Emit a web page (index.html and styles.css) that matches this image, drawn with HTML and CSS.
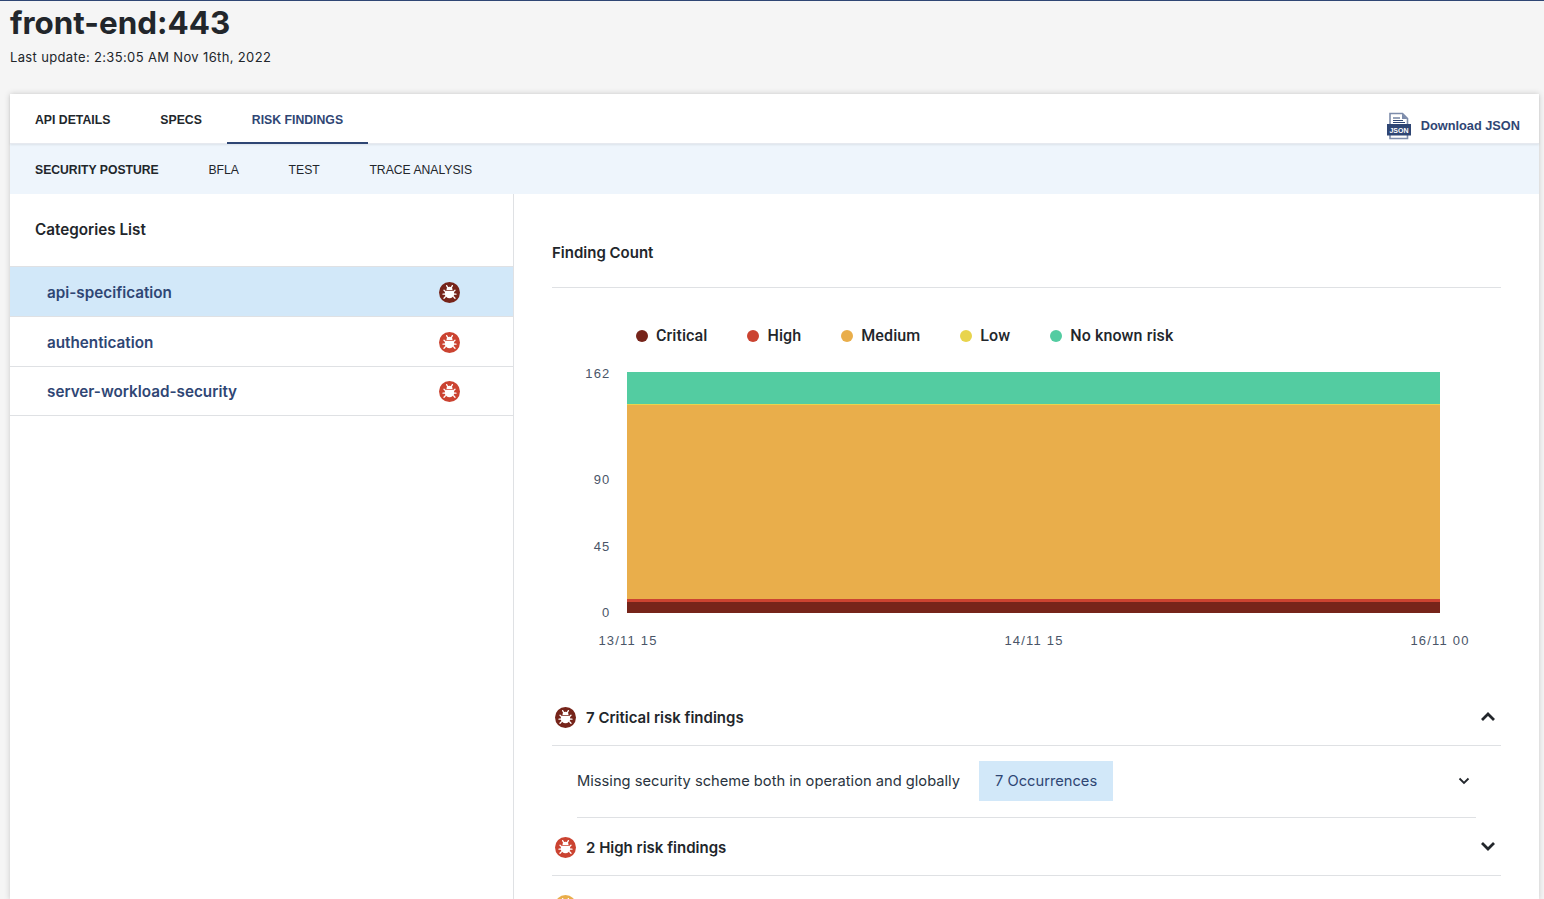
FILE: index.html
```html
<!DOCTYPE html>
<html lang="en">
<head>
<meta charset="utf-8">
<title>front-end:443</title>
<link rel="stylesheet" href="styles.css">
</head>
<body>
<svg class="defs" width="0" height="0" aria-hidden="true">
  <symbol id="bug" viewBox="0 0 21 21">
    <circle cx="10.5" cy="10.5" r="10.500" fill="currentColor"/>
    <g fill="#fff">
      <path d="M7.500 8a3 3.200 0 0 1 6 0z"/>
      <path d="M6.600 8.800h7.800c.8 1.200 1 2.600.8 3.800-.3 2-2.300 3.700-4.700 3.700s-4.400-1.700-4.700-3.700c-.2-1.200 0-2.600.8-3.800z"/>
    </g>
    <g stroke="#fff" stroke-width="1.300" stroke-linecap="round" fill="none">
      <path d="M7.600 3.600l1 1.800M13.400 3.600l-1 1.800M6.400 9.600L5 8.200M14.600 9.600L16 8.200M5.600 12.200H4M15.400 12.200H17M6.400 14.800L5 16.200M14.600 14.800l1.400 1.400"/>
    </g>
  </symbol>
</svg>
<header class="page-head">
  <h1 class="title">front-end:443</h1>
  <p class="updated">Last update: 2:35:05 AM Nov 16th, 2022</p>
</header>
<main class="card">
  <nav class="tabs">
    <a class="tab">API DETAILS</a>
    <a class="tab">SPECS</a>
    <a class="tab tab-active">RISK FINDINGS</a>
    <a class="download">
      <svg class="json-icon" width="24" height="28" viewBox="0 0 24 28">
        <path d="M3 1.500h12.500l5 5v20h-17.500z" fill="#fff" stroke="#7d8cab" stroke-width="1.600"/>
        <path d="M15 1.500v5.500h5.500z" fill="#7d8cab"/>
        <path d="M6 6h7M6 8.500h10M6 10.500h12" stroke="#2f4674" stroke-width="1"/>
        <rect x="0" y="12" width="24" height="11.500" fill="#2f4674"/>
        <text x="12" y="20.500" class="json-text" text-anchor="middle">JSON</text>
      </svg>
      <span>Download JSON</span>
    </a>
  </nav>
  <nav class="subtabs">
    <a class="subtab subtab-active">SECURITY POSTURE</a>
    <a class="subtab">BFLA</a>
    <a class="subtab">TEST</a>
    <a class="subtab">TRACE ANALYSIS</a>
  </nav>
  <div class="columns">
    <aside class="sidebar">
      <h2 class="side-title">Categories List</h2>
      <ul class="cat-list">
        <li class="cat cat-selected"><span>api-specification</span><svg class="bug critical" width="21" height="21"><use href="#bug"/></svg></li>
        <li class="cat"><span>authentication</span><svg class="bug high" width="21" height="21"><use href="#bug"/></svg></li>
        <li class="cat"><span>server-workload-security</span><svg class="bug high" width="21" height="21"><use href="#bug"/></svg></li>
      </ul>
    </aside>
    <section class="content">
      <h2 class="count-title">Finding Count</h2>
      <ul class="legend">
        <li class="legend-item"><i class="dot bg-critical"></i>Critical</li>
        <li class="legend-item"><i class="dot bg-high"></i>High</li>
        <li class="legend-item"><i class="dot bg-medium"></i>Medium</li>
        <li class="legend-item"><i class="dot bg-low"></i>Low</li>
        <li class="legend-item"><i class="dot bg-none"></i>No known risk</li>
      </ul>
      <svg class="chart" width="950" height="300" viewBox="0 0 950 300">
        <rect x="75" y="9" width="813" height="32" fill="#53cca1"/>
        <rect x="75" y="41" width="813" height="1" fill="#e8d44d"/>
        <rect x="75" y="42" width="813" height="195" fill="#e9ae4b"/>
        <rect x="75" y="236" width="813" height="3" fill="#cb4331"/>
        <rect x="75" y="239" width="813" height="11" fill="#76241a"/>
        <g class="axis">
          <text x="58.500" y="15" text-anchor="end">162</text>
          <text x="58.500" y="121" text-anchor="end">90</text>
          <text x="58.500" y="188" text-anchor="end">45</text>
          <text x="58.500" y="254" text-anchor="end">0</text>
          <text x="76" y="282" text-anchor="middle">13/11 15</text>
          <text x="482" y="282" text-anchor="middle">14/11 15</text>
          <text x="888" y="282" text-anchor="middle">16/11 00</text>
        </g>
      </svg>
      <div class="acc-head">
        <svg class="bug critical" width="21" height="21"><use href="#bug"/></svg>
        <span class="acc-title">7 Critical risk findings</span>
        <svg class="chev" width="16" height="10" viewBox="0 0 16 10"><path d="M2 8l6-6 6 6" fill="none" stroke="#22262b" stroke-width="2.800"/></svg>
      </div>
      <div class="acc-row">
        <span class="acc-text">Missing security scheme both in operation and globally</span>
        <span class="occ">7 Occurrences</span>
        <svg class="chev-small" width="12" height="8" viewBox="0 0 12 8"><path d="M1.500 1.500L6 6l4.500-4.500" fill="none" stroke="#22262b" stroke-width="1.800"/></svg>
      </div>
      <div class="acc-head acc-head-second">
        <svg class="bug high" width="21" height="21"><use href="#bug"/></svg>
        <span class="acc-title">2 High risk findings</span>
        <svg class="chev chev-down" width="16" height="10" viewBox="0 0 16 10"><path d="M2 2l6 6 6-6" fill="none" stroke="#22262b" stroke-width="2.800"/></svg>
      </div>
      <div class="acc-head acc-head-third">
        <svg class="bug medium" width="21" height="21"><use href="#bug"/></svg>
      </div>
    </section>
  </div>
</main>
</body>
</html>
```
FILE: styles.css
```css
* { box-sizing: border-box; }
html, body { height: 899px; overflow: hidden; }
body {
  margin: 0;
  background: #f5f5f5;
  border-top: 1px solid #2f4674;
  font-family: "Inter", "Liberation Sans", sans-serif;
  color: #22262b;
}
.defs { position: absolute; }
.page-head { height: 93px; padding: 4px 0 0 10px; }
.title {
  margin: 0;
  font-size: 31.400px;
  line-height: 36px;
  font-weight: 700;
  color: #22262b;
}
.updated {
  margin: 8px 0 0;
  font-size: 13px;
  line-height: 16px;
  letter-spacing: .35px;
  color: #22262b;
}
.card {
  width: 1529px;
  margin-left: 10px;
  height: 806px;
  background: #fff;
  box-shadow: 0 0 6px rgba(0,0,0,.18);
  display: flex;
  flex-direction: column;
}
.tabs {
  display: flex;
  height: 50px;
  flex: none;
  box-shadow: 0 1px 2px rgba(0,0,0,.08);
  border-bottom: 1px solid #e6e9ef;
  position: relative;
  font-family: "Liberation Sans", sans-serif;
}
.tab {
  padding: 1px 25px 0;
  line-height: 50px;
  font-size: 12.250px;
  font-weight: 700;
  color: #22262b;
  height: 50px;
}
.tab-active { color: #2f4674; border-bottom: 2px solid #2f4674; }
.download {
  margin-left: auto;
  padding-right: 19px;
  display: flex;
  align-items: center;
  gap: 10px;
  font-size: 12.750px;
  font-weight: 700;
  color: #2f4674;
  padding-top: 13px;
}
.json-icon { margin-top: 2px; }
.json-text { font: 700 7px "Liberation Sans", sans-serif; fill: #fff; }
.subtabs {
  display: flex;
  flex: none;
  height: 50px;
  background: #eef5fc;
  gap: 49.700px;
  padding: 1px 0 0 25px;
  align-items: center;
  font-family: "Liberation Sans", sans-serif;
  font-size: 12.200px;
}
.subtab { color: #22262b; }
.subtab-active { font-weight: 700; }
.columns { display: flex; flex: 1; min-height: 0; }
.sidebar { width: 504px; flex: none; border-right: 1px solid #dfe1e4; }
.side-title {
  margin: 0;
  padding: 27px 25px 0;
  height: 72px;
  font-size: 15.250px;
  line-height: 18px;
  font-weight: 600;
  color: #22262b;
}
.cat-list { list-style: none; margin: 0; padding: 0; border-top: 1px solid #dfe1e4; }
.cat {
  height: 50px;
  padding: 1px 53.500px 0 37px;
  display: flex;
  align-items: center;
  justify-content: space-between;
  border-bottom: 1px solid #dfe1e4;
  font-size: 15.250px;
  font-weight: 600;
  color: #2f4674;
}
.cat:last-child { height: 49px; padding-top: 0; }
.cat-selected { background: #d2e8f9; }
.critical { color: #76241a; }
.high { color: #cb4331; }
.medium { color: #e9ae4b; }
.bg-critical { background: #76241a; }
.bg-high { background: #cb4331; }
.bg-medium { background: #e9ae4b; }
.bg-low { background: #e8d44d; }
.bg-none { background: #53cca1; }
.content { flex: 1; padding: 0 38px; min-width: 0; overflow: hidden; }
.count-title {
  margin: 0;
  height: 94px;
  padding-top: 50px;
  border-bottom: 1px solid #dfe1e4;
  font-size: 15px;
  line-height: 18px;
  font-weight: 600;
  color: #22262b;
}
.legend {
  list-style: none;
  display: flex;
  margin: 0;
  padding: 20px 0 0 84px;
  height: 75px;
  gap: 40px;
  font-family: "Roboto", sans-serif;
  font-size: 16px;
  line-height: 19px;
  font-weight: 500;
  letter-spacing: .1px;
  color: #22262b;
}
.legend-item { display: flex; align-items: center; gap: 8px; }
.dot { width: 12px; height: 12px; border-radius: 50%; display: block; }
.chart { display: block; width: 950px; height: 300px; margin-bottom: 26px; }
.axis text { font-family: "Liberation Sans", sans-serif; font-size: 13px; letter-spacing: 1.200px; fill: #4a5568; }
.acc-head {
  display: flex;
  align-items: center;
  height: 57px;
  padding: 0 5px 0 3px;
  border-bottom: 1px solid #dfe1e4;
}
.acc-title { margin-left: 10px; font-size: 15px; font-weight: 600; flex: 1; color: #22262b; }
.acc-row {
  display: flex;
  align-items: center;
  height: 72px;
  padding-bottom: 1px;
  margin: 0 25px;
  border-bottom: 1px solid #dfe1e4;
  font-size: 14.700px;
}
.acc-text { color: #2a3440; }
.occ {
  margin-left: 19px;
  background: #d2e8f9;
  padding: 0 16px;
  line-height: 40px;
  color: #2f4674;
}
.chev-small { margin-left: auto; margin-right: 6px; }
.acc-head-second { height: 58px; padding-top: 1px; }
.chev-down { margin-top: -3px; }
.acc-head-third { align-items: flex-start; padding-top: 19px; }
```
